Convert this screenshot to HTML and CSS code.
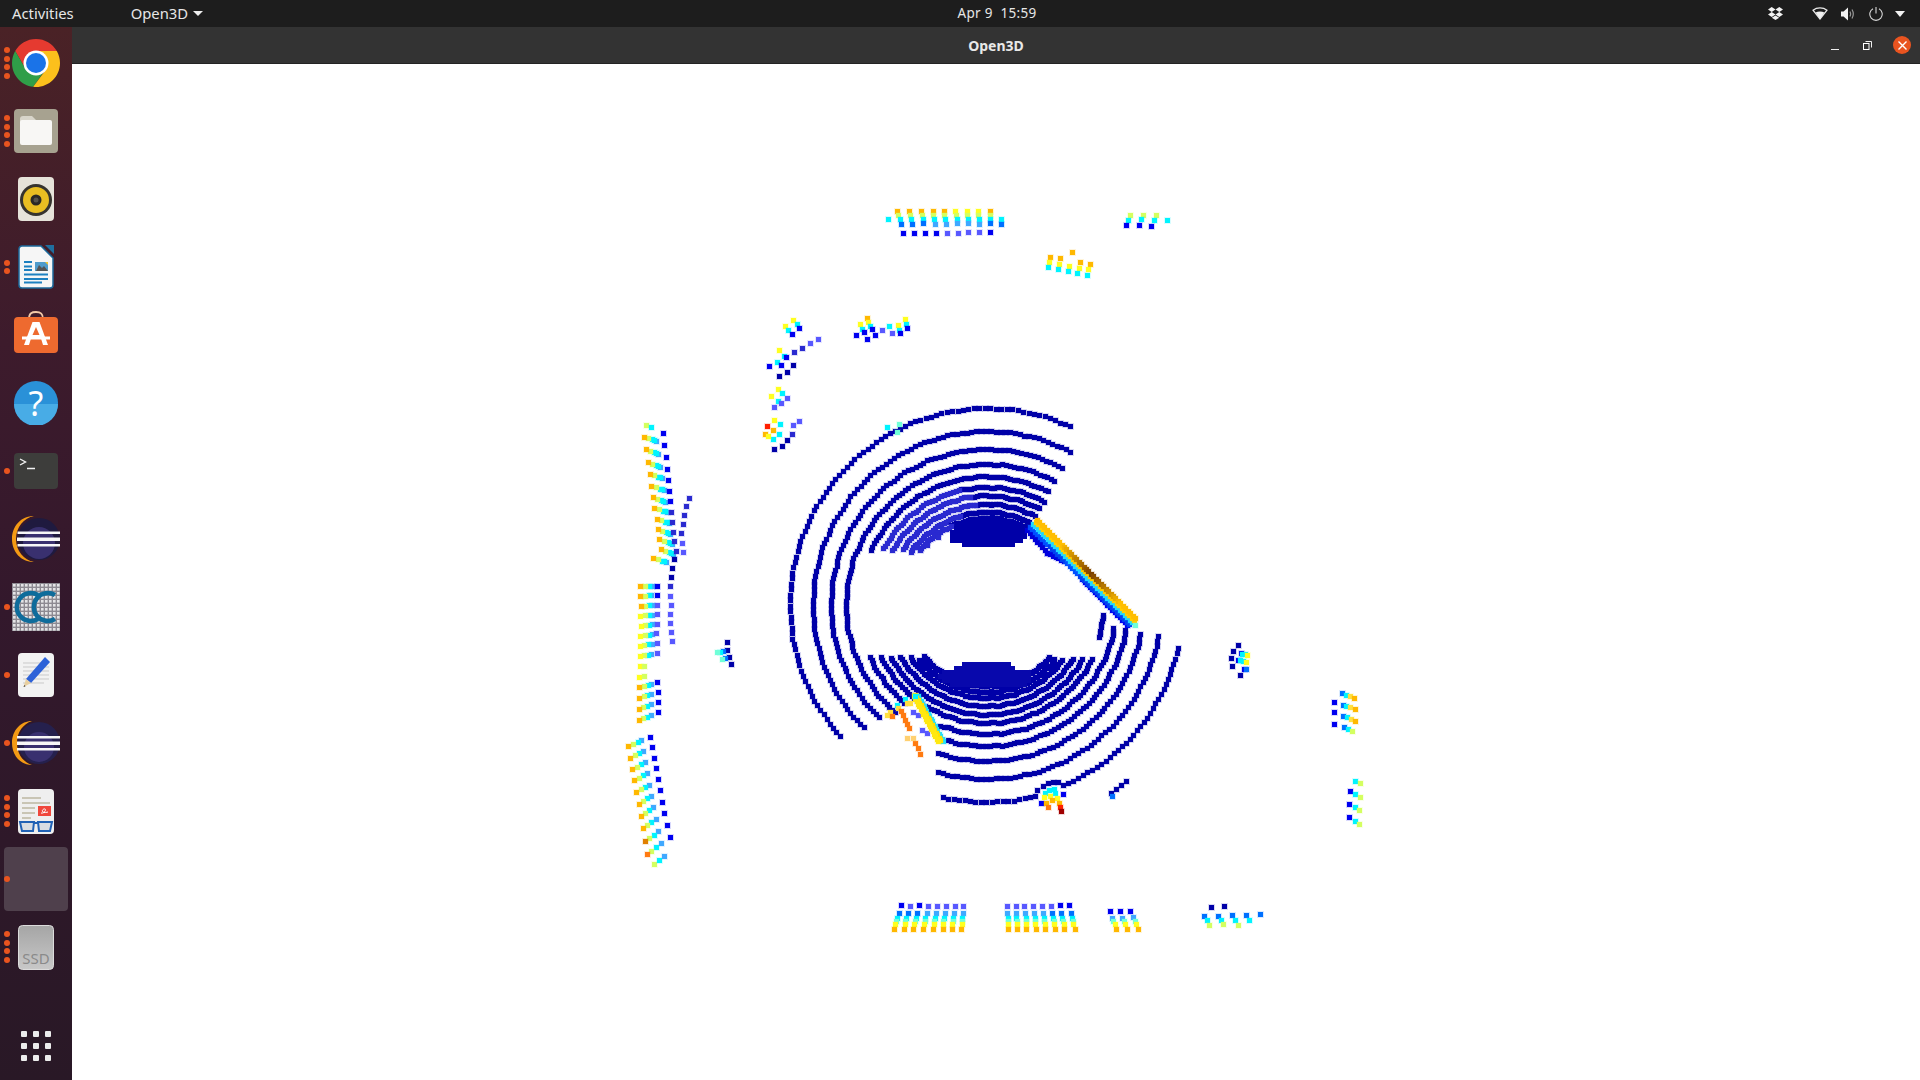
FILE: index.html
```html
<!DOCTYPE html>
<html lang="en">
<head>
<meta charset="utf-8">
<title>Open3D</title>
<link rel="stylesheet" href="styles.css">
</head>
<body>
<header class="topbar">
  <div class="top-left">
    <span class="top-label">Activities</span>
    <span class="top-label app-menu">Open3D<i class="caret"></i></span>
  </div>
  <div class="clock">Apr 9&nbsp;&nbsp;15:59</div>
  <div class="top-right">
    <svg class="tray dropbox" width="15" height="13" viewBox="0 0 15 13"><path fill="#f2f2f2" d="M3.7 0 0 2.5 3.7 5 7.5 2.5ZM11.3 0 7.5 2.5 11.3 5 15 2.5ZM0 7.5 3.7 10 7.5 7.5 3.7 5ZM11.3 5 7.5 7.5 11.3 10 15 7.5ZM3.8 10.8 7.5 13 11.2 10.8 7.5 8.4Z"/></svg>
    <svg class="tray wifi" width="16" height="13" viewBox="0 0 16 13"><path fill="none" stroke="#e8e8e8" stroke-width="1.3" d="M1 3.2C5 .2 11 .2 15 3.2L8 12Z"/><path fill="#f2f2f2" d="M3.6 5.6C6 4.2 10 4.2 12.4 5.6L8 12Z"/></svg>
    <svg class="tray volume" width="15" height="14" viewBox="0 0 15 14"><path fill="#f2f2f2" d="M0 4.5H2.6L7 .5V13.500L2.600 9.500H0Z"/><path fill="none" stroke="#9a9a9a" stroke-width="1.200" d="M9 4.500Q10.400 7 9 9.500M11 2.500Q13.600 7 11 11.500"/></svg>
    <svg class="tray power" width="14" height="14" viewBox="0 0 14 14"><path fill="none" stroke="#d8d8d8" stroke-width="1.100" d="M4 1.700A6.200 6.200 0 1 0 10 1.700M7 0V6.500"/></svg>
    <svg class="tray arrow" width="10" height="6" viewBox="0 0 10 6"><path fill="#f2f2f2" d="M0 0H10L5 6Z"/></svg>
  </div>
</header>
<div class="desktop">
  <nav class="dock">
    <div class="dock-item"><span class="runs"><i></i><i></i><i></i><i></i></span>
      <svg width="48" height="48" viewBox="0 0 48 48"><path fill="#e53a30" d="M24 0C15.100 0 7.400 4.800 3.200 12L13.600 30 24 12H44.800C40.600 4.800 32.900 0 24 0Z"/><path fill="#2f9e48" d="M3.200 12C1.200 15.500 0 19.600 0 24 0 36.300 9.300 46.500 21.200 47.800L31 34 13.600 30Z"/><path fill="#fcc01c" d="M44.800 12H24L34.400 30 21.200 47.800C22.100 47.900 23.100 48 24 48 37.300 48 48 37.300 48 24 48 19.600 46.800 15.500 44.800 12Z"/><circle cx="24" cy="24" r="12.500" fill="#fff"/><circle cx="24" cy="24" r="10" fill="#1a73e8"/></svg>
    </div>
    <div class="dock-item"><span class="runs"><i></i><i></i><i></i><i></i></span>
      <svg width="44" height="44" viewBox="0 0 44 44"><rect width="44" height="44" rx="4" fill="#a7a290"/><path fill="#d8d5ca" d="M6 10a3 3 0 0 1 3-3h9l4 4v6H6Z"/><rect x="6" y="11" width="32" height="25" rx="2" fill="#f8f7f5"/></svg>
    </div>
    <div class="dock-item">
      <svg width="36" height="44" viewBox="0 0 36 44"><rect width="36" height="44" rx="4" fill="#e6e3da"/><circle cx="18" cy="23" r="16" fill="#36342f"/><circle cx="18" cy="23" r="13" fill="#e9be22"/><circle cx="18" cy="23" r="5.500" fill="#2a2926"/><circle cx="18" cy="23" r="2.500" fill="#55534c"/></svg>
    </div>
    <div class="dock-item"><span class="runs"><i></i><i></i></span>
      <svg width="36" height="44" viewBox="0 0 36 44"><path fill="#1f6f9f" d="M27 0H36V9Z"/><path fill="#f6f6f6" stroke="#1c6a9c" stroke-width="1.500" d="M4 1H23L35 13V40a3 3 0 0 1-3 3H4a3 3 0 0 1-3-3V4a3 3 0 0 1 3-3Z"/><path fill="none" stroke="#1d80c0" stroke-width="2" d="M6 17H14M6 21.500H14M6 25H14M6 29.500H30M6 34H30M6 37.500H24"/><rect x="17" y="17" width="13" height="9" fill="#4f9bcc"/><path fill="#555" d="M18 26 21 20 24 23 26 21 30 26Z"/><path fill="#f1c534" d="M27 17H30V20Z"/></svg>
    </div>
    <div class="dock-item">
      <svg class="nudge-up" width="44" height="42" viewBox="0 0 44 42"><path fill="none" stroke="#f3c9a8" stroke-width="1.800" d="M15 8C15 2 18 1 22 1S29 2 29 8"/><rect y="6" width="44" height="36" rx="4" fill="#ee6a2f"/><path fill="#fff" d="M18.500 11H25.500L34 34H29L27 27.500H17L15 34H10ZM22 16 18.500 24H25.500Z"/><rect x="8" y="25.500" width="28" height="3" fill="#fff"/></svg>
    </div>
    <div class="dock-item">
      <svg width="44" height="44" viewBox="0 0 44 44"><circle cx="22" cy="22" r="22" fill="#2a91d8"/><path fill="#48ace6" d="M0 23H44A22 22 0 0 1 0 23Z"/><text class="help-mark" x="22" y="35" text-anchor="middle">?</text></svg>
    </div>
    <div class="dock-item"><span class="runs"><i></i></span>
      <svg width="44" height="36" viewBox="0 0 44 36"><rect width="44" height="36" rx="4" fill="#3d3d3b"/><path fill="none" stroke="#f2f2f2" stroke-width="1.400" d="M6 6 11.500 9 6 12M13 15.500H21"/></svg>
    </div>
    <div class="dock-item">
      <svg width="48" height="46" viewBox="0 0 48 46"><path fill="#f49a14" d="M22 0C9 0 0 10 0 23S9 46 22 46C12 44 4 35 4 23S12 2 22 0Z"/><circle cx="27" cy="23" r="21" fill="#1f1a3f"/><circle cx="27" cy="27" r="16" fill="#39306f"/><path fill="#f7f7f7" d="M5.500 15.500H48V18H5.500ZM5 21.500H48V25H5ZM5.500 28H48V30.500H5.500Z"/></svg>
    </div>
    <div class="dock-item"><span class="runs"><i></i></span>
      <svg width="48" height="48" viewBox="0 0 48 48"><defs><pattern id="dotgrid" width="4" height="4" patternUnits="userSpaceOnUse"><rect width="4" height="4" fill="#8d8a92"/><rect x="1" y="1" width="2.600" height="2.600" fill="#e4e4e6"/></pattern></defs><rect width="48" height="48" fill="url(#dotgrid)"/><g fill="none" stroke="#0e6c9b" stroke-width="4.500"><path d="M26 12A14 14 0 1 0 26 36"/><path d="M43 12A14 14 0 1 0 43 36"/></g></svg>
    </div>
    <div class="dock-item"><span class="runs"><i></i></span>
      <svg width="36" height="44" viewBox="0 0 36 44"><rect width="36" height="44" rx="4" fill="#f2f2f2"/><path stroke="#c9c9c9" fill="none" d="M5 10H31M5 14H31M5 18H31M5 22H31M5 26H31M5 30H26"/><path fill="#2d62d8" d="M27 4 32 9 13 30 8 26Z"/><path fill="#e8cfa0" d="M8 26 13 30 5.500 34Z"/><path fill="#333" d="M6.500 32 7.500 33.200 5.500 34Z"/></svg>
    </div>
    <div class="dock-item"><span class="runs"><i></i></span>
      <svg width="48" height="44" viewBox="0 0 48 44"><path fill="#f49a14" d="M20 0C9 0 0 9 0 22S9 44 20 44C11 41 5 33 5 22S11 3 20 0Z"/><circle cx="27" cy="22" r="21" fill="#25204d"/><circle cx="27" cy="26" r="15" fill="#39306f"/><path fill="#f7f7f7" d="M5 15H48V17.500H5ZM5 20.500H48V24H5ZM5 27H48V29.500H5Z"/></svg>
    </div>
    <div class="dock-item"><span class="runs"><i></i><i></i><i></i><i></i></span>
      <svg width="36" height="45" viewBox="0 0 36 45"><rect width="36" height="45" rx="4" fill="#efefef"/><path fill="none" stroke="#c9c5b5" stroke-width="2" d="M4 9H23M4 14H32M4 19H17M4 24H17M4 29H13M4 34H32"/><rect x="20" y="17" width="13" height="10" fill="#f0473c"/><path fill="none" stroke="#fff" d="M23 24C27 25 29 19 26 20S24 25 30 23"/><g fill="#d9dde2" stroke="#2162b5" stroke-width="2"><path d="M2 33H16L15 42H4Z"/><path d="M20 33H34L32 42H21Z"/></g><path stroke="#2162b5" stroke-width="2" d="M16 34H20"/></svg>
    </div>
    <div class="dock-item dock-active"><span class="runs"><i></i></span></div>
    <div class="dock-item"><span class="runs"><i></i><i></i><i></i><i></i></span>
      <svg width="36" height="45" viewBox="0 0 36 45"><defs><linearGradient id="ssdfill" x1="0" y1="0" x2="0" y2="1"><stop offset="0" stop-color="#a5a5a5"/><stop offset="1" stop-color="#c8c8c8"/></linearGradient></defs><rect x=".5" y=".5" width="35" height="44" rx="4" fill="url(#ssdfill)" stroke="#dcdcdc"/><text class="ssd-mark" x="18" y="39" text-anchor="middle">SSD</text></svg>
    </div>
    <div class="dock-item dock-grid"><div class="grid-dots"><i></i><i></i><i></i><i></i><i></i><i></i><i></i><i></i><i></i></div></div>
  </nav>
  <main class="window">
    <div class="titlebar">
      <span></span>
      <span class="win-title">Open3D</span>
      <div class="win-controls">
        <i class="win-min"></i>
        <svg width="9" height="9" viewBox="0 0 9 9"><path fill="none" stroke="#f0f0f0" d="M2.500.5H8.500V6.500"/><rect x=".5" y="2.500" width="5.500" height="6" fill="#333" stroke="#fff"/></svg>
        <span class="win-close"><svg width="9" height="9" viewBox="0 0 9 9"><path stroke="#fff" stroke-width="1.400" d="M.5.5 8.500 8.500M8.500.5.500 8.500"/></svg></span>
      </div>
    </div>
    <canvas id="cloud" class="cloud" width="1848" height="1016"></canvas>
  </main>
</div>
<script src="script.js"></script>
</body>
</html>
```
FILE: styles.css
```css
* { box-sizing: border-box; }
html, body { margin: 0; height: 100%; overflow: hidden; }
body {
  width: 1920px;
  height: 1080px;
  display: flex;
  flex-direction: column;
  background: #fff;
  font-family: "Noto Sans", "Open Sans", sans-serif;
}
.topbar {
  height: 27px;
  flex: none;
  display: flex;
  align-items: center;
  background: #1d1d1d;
  color: #e6e6e6;
  font-size: 14.800px;
  line-height: 27px;
}
.top-left { width: 957px; display: flex; padding-left: 12px; }
.top-label { display: inline-flex; align-items: center; }
.app-menu { margin-left: 57px; }
.caret {
  width: 0; height: 0;
  margin-left: 5px;
  border-left: 5px solid transparent;
  border-right: 5px solid transparent;
  border-top: 5px solid #eee;
}
.clock { width: 80px; text-align: center; white-space: nowrap; font-size: 13.500px; letter-spacing: .3px; }
.top-right { flex: 1; display: flex; align-items: center; justify-content: flex-end; padding-right: 15px; }
.tray { display: block; }
.dropbox { margin-right: 29px; }
.wifi { margin-right: 13px; }
.volume { margin-right: 13px; }
.power { margin-right: 12px; }

.desktop { flex: 1; display: flex; min-height: 0; }
.dock {
  width: 72px;
  flex: none;
  display: flex;
  flex-direction: column;
  padding-top: 2px;
  background: linear-gradient(180deg, #4a2226 0%, #3d1b2c 30%, #33182c 55%, #291826 100%);
}
.dock-item {
  position: relative;
  height: 68px;
  flex: none;
  display: flex;
  align-items: center;
  justify-content: center;
}
.dock-item svg { display: block; }
.dock-item .nudge-up { margin-bottom: 6px; }
.dock-active::before {
  content: "";
  width: 64px;
  height: 64px;
  border-radius: 4px;
  background: #4f404c;
}
.runs {
  position: absolute;
  left: 4px;
  top: 0;
  bottom: 0;
  width: 6px;
  display: flex;
  flex-direction: column;
  justify-content: center;
  gap: 2.600px;
}
.runs i { width: 6px; height: 6px; border-radius: 50%; background: #e9541f; }
.dock-grid { margin-top: auto; }
.grid-dots { display: grid; grid-template-columns: repeat(3, 6px); gap: 6px; }
.grid-dots i { width: 6px; height: 6px; border-radius: 1px; background: #ececec; }
.help-mark { font: 34px "Noto Sans", sans-serif; fill: #fff; }
.ssd-mark { font: 15px "Noto Sans", sans-serif; fill: #8a8a8a; }

.window { flex: 1; min-width: 0; display: flex; flex-direction: column; }
.titlebar {
  height: 37px;
  flex: none;
  display: grid;
  grid-template-columns: 1fr auto 1fr;
  align-items: center;
  background: #333;
  border-bottom: 1px solid #232323;
  color: #e8e8e8;
}
.win-title { font-size: 14px; font-weight: 700; }
.win-controls { display: flex; align-items: center; justify-content: flex-end; padding-right: 9px; }
.win-min { width: 8px; height: 1.500px; margin: 9px 24px 0 0; background: #f0f0f0; }
.win-close {
  width: 18px; height: 18px;
  margin-left: 21px;
  display: flex; align-items: center; justify-content: center;
  border-radius: 50%;
  background: #e95420;
}
.cloud { display: block; flex: 1; min-height: 0; background: #fff; filter: blur(.5px); }
```
FILE: script.js
```js
(function () {
  var cv = document.getElementById('cloud');
  var g = cv.getContext('2d');
  var OX = 72, OY = 64, CX = 987, CY = 605;
  var C = { a:'#0000a8', b:'#0000f0', l:'#5858ff', k:'#2a2ad0', z:'#0070ff', s:'#40a8ff', c:'#00f4ff', m:'#70ffd8',
            g:'#d4ff60', y:'#ffff20', p:'#ffe040', o:'#ffb800', n:'#ff7a10', r:'#ff2000', d:'#a00000', u:'#e08000', w:'#ffd070' };

  function dot(x, y, col) {
    var px = Math.round(x - OX), py = Math.round(y - OY);
    g.globalAlpha = 0.15;
    g.fillStyle = col;
    g.fillRect(px - 3, py - 3, 7, 7);
    g.globalAlpha = 1;
    g.fillRect(px - 2, py - 2, 5, 5);
  }
  // Points transcribed from a 3x crop: origin + coordinates / 3.
  function P(ox, oy, key, s) {
    s.trim().split(/\s+/).forEach(function (t) {
      var v = t.split(',');
      dot(ox + v[0] / 3, oy + v[1] / 3, C[v[2] || key]);
    });
  }
  function theta(p) {
    return Math.atan2(-(p[0] - CX), -(p[1] - CY));
  }
  function arc(r, a, b, key) {
    var t1 = theta(a), t2 = theta(b), step = 1.6 * Math.PI / 180;
    if (t2 < t1) t2 += Math.PI * 2;
    for (var t = t1; t <= t2 + 0.001; t += step) {
      var wob = Math.sin(t * 37) * 0.5;
      dot(CX - (r + wob) * Math.sin(t), CY - (r + wob) * Math.cos(t), C[key || 'a']);
    }
  }
  // A filled patch of points, so the edge is stepped as in the cloud.
  function patch(ox, oy, col, pts) {
    var path = new Path2D();
    pts.forEach(function (p, i) {
      var x = ox + p[0] / 3 - OX, y = oy + p[1] / 3 - OY;
      if (i) path.lineTo(x, y); else path.moveTo(x, y);
    });
    path.closePath();
    g.fillStyle = col;
    for (var y = 400; y < 700; y += 4) {
      for (var x = 800; x < 1050; x += 4) {
        if (g.isPointInPath(path, x, y)) g.fillRect(x - 2, y - 2, 5, 5);
      }
    }
  }
  function lineDots(a, b, n, colFn, off) {
    for (var i = 0; i <= n; i++) {
      var t = i / n;
      dot(a[0] + (b[0] - a[0]) * t + off[0], a[1] + (b[1] - a[1]) * t + off[1], colFn(t));
    }
  }

  // Rings
  arc(197, [1070, 427], [843, 737]);
  arc(197, [943, 796], [1037, 790]);
  arc(195.500, [1063, 785], [1180, 647]);
  arc(174, [1070, 452], [867, 730]);
  arc(174, [938, 772], [1158, 632]);
  arc(156, [1062, 468], [882, 720]);
  arc(156, [938, 753], [1140, 632]);
  arc(141, [1055, 480], [897, 713]);
  arc(141, [947, 742], [1125, 627]);
  arc(128.500, [1048, 491], [870, 552]);
  arc(128, [870, 657], [905, 705]);
  arc(129, [940, 727], [1115, 625]);
  arc(118, [1045, 500], [960, 492]);
  arc(118, [960, 492], [883, 550], 'k');
  arc(118, [882, 657], [1092, 658]);
  arc(116, [1102, 638], [1103, 613]);
  arc(109.500, [1040, 507], [970, 497]);
  arc(109.500, [970, 497], [893, 551], 'k');
  arc(109.500, [892, 657], [1082, 659]);
  arc(101, [1035, 515], [975, 505]);
  arc(101, [975, 505], [902, 550], 'k');
  arc(101, [901, 657], [1073, 658]);
  arc(93, [1030, 520], [960, 515]);
  arc(93, [960, 515], [910, 552], 'k');
  arc(93, [910, 658], [1065, 660]);
  arc(87, [1028, 525], [950, 525]);
  arc(87, [950, 525], [917, 550], 'k');
  arc(87, [918, 660], [1057, 659]);
  arc(81, [923, 657], [1050, 658]);

  // Ground patches
  patch(770, 390, '#0000a8', [[535,425],[560,402],[640,388],[700,388],[775,405],[770,430],[750,450],[720,470],[650,462],[590,470],[560,450],[545,450]]);
  patch(770, 620, '#0808ac', [[498,170],[520,150],[575,140],[585,122],[640,132],[715,125],[730,145],[775,150],[790,175],[760,195],[680,203],[600,203],[540,195]]);
  P(770, 390, 'k', '505,440 470,465 450,480 440,470');

  // Diagonal wall
  lineDots([1027, 530], [1047, 553], 8, function () { return '#0000d8'; }, [0, 0]);
  lineDots([1047, 553], [1064, 561], 6, function () { return '#0000e0'; }, [0, 0]);
  lineDots([1082, 579], [1127, 625], 18, function () { return '#0000f0'; }, [0, 0]);
  lineDots([1031, 525], [1130, 622], 40, function (t) { return t < 0.2 || (t > 0.35 && t < 0.48) ? '#0050ff' : '#0040f0'; }, [-1, 2]);
  lineDots([1033, 523], [1132, 621], 40, function () { return '#20d8ff'; }, [0, 1]);
  lineDots([1035, 522], [1133, 620], 40, function () { return '#ffd000'; }, [1, 0]);
  var brown = function (t) {
    var f = Math.max(0, 1 - Math.abs(t - 0.55) / 0.3);
    var R = Math.round(255 - 130 * f), G = Math.round(190 - 125 * f);
    return 'rgb(' + R + ',' + G + ',0)';
  };
  lineDots([1036, 521], [1134, 619], 40, brown, [1, -1]);
  P(770, 390, 'm', '1095,704');

  // Lower-left object
  P(770, 620, 'l', '430,275 445,285 455,330 470,338');
  lineDots([916, 695], [941, 740], 18, function () { return '#20e0ff'; }, [2, 1]);
  lineDots([913, 696], [938, 741], 18, function () { return '#ffe000'; }, [2, -1]);
  lineDots([914, 696], [938, 741], 18, function () { return '#ffe810'; }, [0, 0]);
  P(770, 620, 'c', '435,228 405,238 380,255');
  P(770, 620, 'p', '410,250 420,250 385,265 360,275 350,285');
  P(770, 620, 'n', '367,288 392,272 400,285 405,300 410,313 417,325 435,370 443,385 450,403');
  P(770, 620, 'w', '412,355 430,355');

  // Bottom reflector cluster
  P(770, 620, 'a', '835,490 848,485 820,497 802,510 865,487');
  P(770, 620, 'b', '880,522 813,548');
  P(770, 620, 'c', '825,518 838,510 853,506 856,518');
  P(770, 620, 'y', '822,530 840,527 860,534');
  P(770, 620, 'o', '828,548 845,540 866,548');
  P(770, 620, 'n', '833,562');
  P(770, 620, 'r', '870,562');
  P(770, 620, 'd', '874,572');
  P(770, 620, 'a', '1068,483 1052,495 1038,508 1022,518');
  P(770, 620, 'z', '1027,527');

  // Top clusters (crop origin 750,190)
  P(750, 190, 'o', '442,62 478,62 513,62 548,63 583,63');
  P(750, 190, 'y', '616,63 651,64 685,64');
  P(750, 190, 'o', '719,64');
  P(750, 190, 'g', '445,75 481,75 516,75 549,75 583,75 618,75 652,75 685,75 719,75');
  P(750, 190, 'c', '414,88 449,88 484,88 518,88 552,88 586,88 620,88 653,88 686,88 719,88 753,88');
  P(750, 190, 'z', '453,101 487,101 520,100 719,100 752,101');
  P(750, 190, 's', '554,101 588,101 621,100 654,100 687,101');
  P(750, 190, 'b', '459,129 493,130 525,128 558,129 720,126');
  P(750, 190, 'l', '591,129 623,130 655,127 688,127');
  P(750, 190, 'g', '1140,75 1178,75 1217,76');
  P(750, 190, 'c', '1135,89 1173,88 1212,89 1251,90');
  P(750, 190, 'b', '1129,104 1166,105 1203,108');
  P(750, 190, 'o', '966,187 900,200 931,205 990,216 1020,222');
  P(750, 190, 'y', '897,216 927,221 956,228 986,234 1015,238');
  P(750, 190, 'c', '894,232 924,238 953,243 982,250 1011,255');
  P(750, 190, 'y', '130,389 105,407 88,481 83,597 64,617 72,690');
  P(750, 190, 'c', '140,403 115,420 103,497 82,516 97,608 85,633 90,703 88,732 68,746');
  P(750, 190, 'b', '148,414 126,432 108,502 93,525 57,527');
  P(750, 190, 'l', '205,447 181,460 112,623 93,640 71,652 148,692 128,705');
  P(750, 190, 'k', '157,474 132,487 125,732');
  P(750, 190, 'a', '129,525 112,547 87,558 112,751 97,768 73,776');
  P(750, 190, 'r', '52,707');
  P(750, 190, 'o', '68,720 45,732');
  P(750, 190, 'y', '55,738');
  P(750, 190, 'o', '350,383');
  P(750, 190, 'y', '331,403 353,395 443,406 464,388');
  P(750, 190, 'c', '336,418 360,407 418,407 469,403 448,420');
  P(750, 190, 'b', '365,417 342,425 319,436 351,446 375,436 472,415 451,430');
  P(750, 190, 'l', '396,420 426,429');
  P(750, 190, 'c', '412,711');
  P(750, 190, 'm', '448,703 440,725');

  // Left walls (crop origin 610,410)
  P(610, 410, 'g', '109,44');
  P(610, 410, 'c', '122,50');
  [[101,80],[107,118],[113,157],[119,192],[124,228],[128,262],[133,294],[140,327],[144,358],[148,388],[153,418],[130,444]].forEach(function (r) {
    var x = r[0], y = r[1];
    P(610, 410, 's', (x + 37) + ',' + (y + 13));
    P(610, 410, 'c', (x + 31) + ',' + (y + 10));
    P(610, 410, 'c', (x + 25) + ',' + (y + 8));
    P(610, 410, 'g', (x + 13) + ',' + (y + 4));
    P(610, 410, 'o', x + ',' + y);
  });
  P(610, 410, 'b', '160,69 163,106 167,142 170,176 174,210 177,242 180,274');
  P(610, 410, 'k', '183,305 187,336 189,365 193,393 197,422');
  P(610, 410, 'a', '191,448 185,475 184,502');
  P(610, 410, 'k', '180,529');
  P(610, 410, 'l', '181,557 183,584 181,611 181,638 183,665 185,692');
  P(610, 410, 'k', '237,263 227,288 222,315 218,342 214,369');
  P(610, 410, 'l', '217,398 219,425');
  [
    [91,528,104,528,116,528,127,527,142,527,'o','b'],[91,558,104,557,117,556,124,556,142,556,'o','b'],
    [92,588,104,587,117,586,126,585,142,585,'o','l'],[91,618,104,616,117,615,126,614,142,613,'y','l'],
    [92,647,104,646,117,644,126,643,142,641,'y','l'],[90,678,104,676,117,674,126,672,139,670,'y','l'],
    [90,708,102,706,115,703,125,701,141,699,'y','l'],[89,739,102,736,113,734,124,731,141,728,'y','l'],
    [88,831,101,828,113,825,122,821,142,816,'o','b'],[88,863,101,859,111,856,122,852,143,846,'o','b'],
    [87,896,100,892,112,888,122,883,144,876,'o','b'],[86,929,98,924,110,920,122,915,143,907,'o','b'],
    [55,1009,68,1003,83,996,94,991,120,980,'o','b'],[61,1043,75,1036,88,1029,100,1022,125,1011,'o','b'],
    [67,1077,81,1070,94,1063,105,1056,131,1043,'o','b'],[73,1111,86,1104,99,1096,112,1089,138,1075,'o','b'],
    [78,1146,93,1138,105,1131,116,1124,144,1108,'o','b'],[86,1181,99,1174,112,1165,124,1157,150,1141,'o','b'],
    [92,1218,105,1208,118,1200,130,1192,157,1175,'o','b'],[99,1254,111,1246,124,1237,137,1227,163,1210,'o','b'],
    [105,1294,118,1283,131,1274,144,1264,172,1244,'u','b'],[111,1332,124,1322,137,1312,153,1300,179,1280,'n','b']
  ].forEach(function (r) {
    P(610, 410, 's', r[6] + ',' + r[7]);
    P(610, 410, 'c', r[4] + ',' + r[5]);
    P(610, 410, 'g', r[2] + ',' + r[3]);
    P(610, 410, r[10], r[0] + ',' + r[1]);
    P(610, 410, r[11], r[8] + ',' + r[9]);
  });
  P(610, 410, 'y', '89,769 88,800');
  P(610, 410, 'g', '102,767 102,798 132,1361');
  P(610, 410, 'c', '146,1350');
  P(610, 410, 's', '161,1337');
  P(610, 410, 'a', '352,696 352,720 358,741 362,763');
  P(610, 410, 'z', '340,722 345,745');
  P(610, 410, 'c', '330,725');
  P(610, 410, 'm', '322,727 335,748');

  // Bottom clusters (crop origin 880,880)
  var rows = function (key, y, xs) { xs.forEach(function (x) { P(880, 880, key, x + ',' + y); }); };
  rows('l', 77, [90,145,171,197,224,250,380,407,433,459,485,512]);
  rows('b', 76, [63,117,539,567]);
  rows('z', 99, [56,84,112,517,544,572]);
  rows('s', 99, [140,167,194,221,248,381,408,435,462,490]);
  rows('c', 114, [50,78,107,136,164,191,218,246,383,409,437,464,491,519,547,576]);
  rows('m', 123, [48,76,105,134,162,190,218,246,383,410,438,465,493,521,549,578]);
  rows('y', 133, [45,74,102,132,161,189,217,245,383,410,438,466,494,523,552,580]);
  rows('o', 146, [42,71,100,130,159,188,216,244,383,410,439,467,495,524,553,584]);
  P(880, 880, 'b', '689,94 720,94 750,92');
  P(880, 880, 's', '696,113 727,113 759,111');
  P(880, 880, 'm', '700,122 733,122 765,123');
  P(880, 880, 'y', '704,133 736,132 769,133');
  P(880, 880, 'o', '708,147 740,147 773,146');
  P(880, 880, 'a', '993,80 1032,77');
  P(880, 880, 'z', '973,108 1013,108 1055,106 1098,105 1141,101');
  P(880, 880, 'c', '981,120 1022,121 1064,119 1108,119');
  P(880, 880, 'g', '988,134 1030,133 1075,134');

  // Right clusters (crop origin 1210,620)
  P(1210, 620, 'a', '85,74 69,93 62,114 66,137 90,166');
  P(1210, 620, 'b', '92,98 85,119 103,147');
  P(1210, 620, 'c', '97,101 104,102 91,121 99,123');
  P(1210, 620, 'y', '112,104 107,127');
  P(1210, 620, 'z', '107,148');
  P(1210, 620, 'z', '395,220 398,254 399,287 401,322');
  P(1210, 620, 'c', '407,224 409,257 411,292 414,327');
  P(1210, 620, 'p', '420,229 421,262 424,297');
  P(1210, 620, 'g', '425,332');
  P(1210, 620, 'o', '433,233 435,267 436,302');
  P(1210, 620, 'b', '373,245 372,277 373,311 421,513 417,551 416,591');
  P(1210, 620, 'c', '434,482 435,521 434,561 435,603');
  P(1210, 620, 'g', '449,490 449,530 448,570 448,612');
})();
```
